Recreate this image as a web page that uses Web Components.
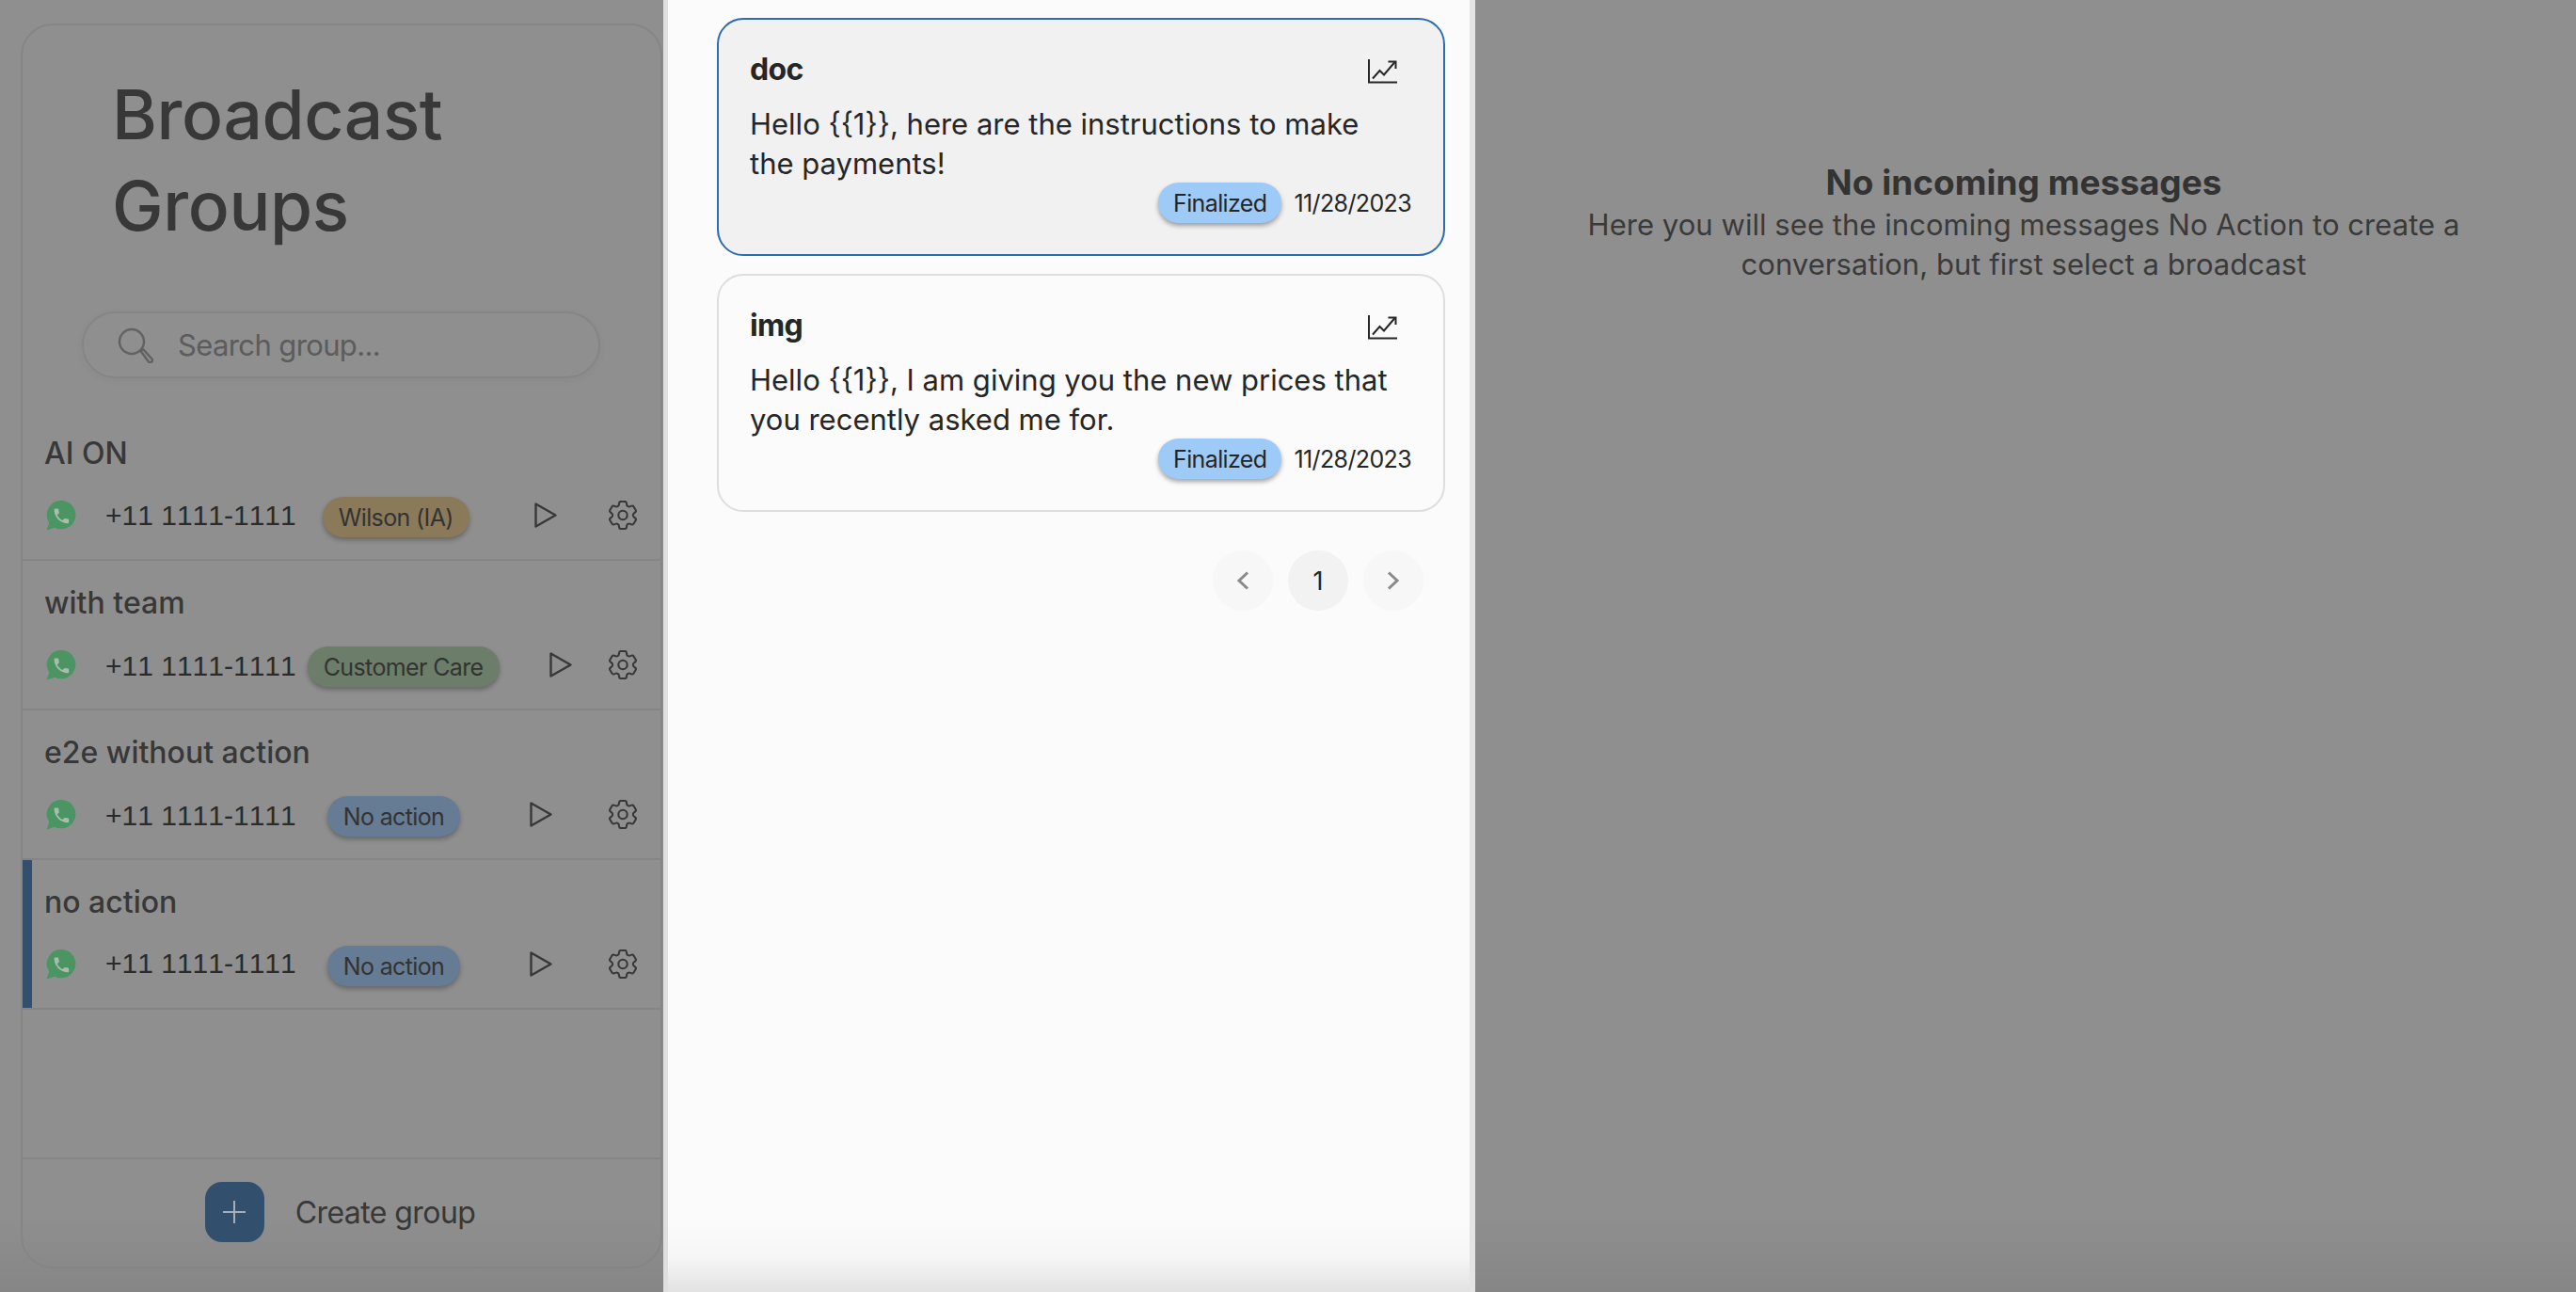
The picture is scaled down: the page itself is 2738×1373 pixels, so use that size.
<!DOCTYPE html>
<html lang="en">
<head>
<meta charset="utf-8">
<title>Broadcast Groups</title>
<style>
    html, body { margin: 0; height: 100%; }
    body {
        font-family: "Inter", "Liberation Sans", sans-serif;
        overflow: hidden;
    }
</style>
</head>
<body>

<app-shell>
    <group-panel slot="left">
        <group-row name="AI ON" chip="Wilson (IA)" tone="gold" chip-gap="28" play-gap="69" lift="4"></group-row>
        <group-row name="with team" chip="Customer Care" tone="green" chip-gap="12" play-gap="53"></group-row>
        <group-row name="e2e without action" chip="No action" tone="blue" chip-gap="33" play-gap="74" lift="1"></group-row>
        <group-row name="no action" chip="No action" tone="blue" chip-gap="33" play-gap="74" lift="6" active></group-row>
    </group-panel>

    <broadcast-list slot="middle">
        <broadcast-card name="doc" date="11/28/2023" selected>Hello {{1}}, here are the instructions to make the payments!</broadcast-card>
        <broadcast-card name="img" date="11/28/2023">Hello {{1}}, I am giving you the new prices that you recently asked me for.</broadcast-card>
        <page-nav></page-nav>
    </broadcast-list>

    <empty-inbox slot="right"></empty-inbox>
</app-shell>

<script>
    const gearPath = 'M9.594 3.94c.09-.542.56-.94 1.11-.94h2.593c.55 0 1.02.398 1.11.94l.213 1.281c.063.374.313.686.645.87.074.04.147.083.22.127.325.196.72.257 1.075.124l1.217-.456a1.125 1.125 0 0 1 1.37.49l1.296 2.247a1.125 1.125 0 0 1-.26 1.431l-1.003.827c-.293.241-.438.613-.43.992a7.723 7.723 0 0 1 0 .255c-.008.378.137.75.43.991l1.004.827c.424.35.534.955.26 1.43l-1.298 2.247a1.125 1.125 0 0 1-1.369.491l-1.217-.456c-.355-.133-.75-.072-1.076.124a6.47 6.47 0 0 1-.22.128c-.331.183-.581.495-.644.869l-.213 1.281c-.09.543-.56.94-1.11.94h-2.594c-.55 0-1.019-.398-1.11-.94l-.213-1.281c-.062-.374-.312-.686-.644-.87a6.52 6.52 0 0 1-.22-.127c-.325-.196-.72-.257-1.076-.124l-1.217.456a1.125 1.125 0 0 1-1.369-.49l-1.297-2.247a1.125 1.125 0 0 1 .26-1.431l1.004-.827c.292-.24.437-.613.43-.991a6.932 6.932 0 0 1 0-.255c.007-.38-.138-.751-.43-.992l-1.004-.827a1.125 1.125 0 0 1-.26-1.43l1.297-2.247a1.125 1.125 0 0 1 1.37-.491l1.216.456c.356.133.751.072 1.076-.124.072-.044.146-.086.22-.128.332-.183.582-.495.644-.869l.214-1.28Z';

    const icons = {
        search: `<svg width="38" height="38" viewBox="0 0 38 38" fill="none" stroke="#626262" stroke-width="2.4"><circle cx="15" cy="15" r="13"/><path d="M24.5 25 L27 23 L37 34 Q37.5 36 35.5 37 Q34 37.5 33 36.5 Z" stroke-linejoin="round"/></svg>`,
        whatsapp: `<svg width="32" height="32" viewBox="1 1 29.500 29.500"><path d="M16 1a14 14 0 1 1-6.6 26.4L1.500 30l2.500-7.300A14 14 0 0 1 16 1z" fill="#4a9562"/><g transform="translate(6.500 6.500) scale(.8)"><path fill="#a8bdae" d="M6.620 10.790c1.440 2.830 3.760 5.140 6.590 6.590l2.200-2.200c.27-.27.67-.36 1.020-.24 1.120.37 2.330.57 3.570.57.55 0 1 .45 1 1V20c0 .55-.45 1-1 1-9.390 0-17-7.610-17-17 0-.55.45-1 1-1h3.500c.55 0 1 .45 1 1 0 1.250.2 2.450.57 3.570.11.35.03.74-.25 1.020l-2.200 2.200z"/></g></svg>`,
        play: `<svg width="24" height="27" viewBox="0 0 24 27" fill="none" stroke="#383838" stroke-width="2.400" stroke-linejoin="round"><path d="M1.500 1.500 V25.500 L22.500 13.500 Z"/></svg>`,
        gear: `<svg width="30" height="31" viewBox="3 2.400 18 19.200" fill="none" stroke="#383838" stroke-width="1.300"><path d="${gearPath}"/><circle cx="12" cy="12" r="2.900"/></svg>`,
        plus: `<svg width="26" height="26" viewBox="0 0 26 26" stroke="#a7aeb6" stroke-width="2"><path d="M13 1 V25 M1 13 H25"/></svg>`,
        chart: `<svg width="31" height="26" viewBox="0 0 31 26" fill="none" stroke="#262626" stroke-width="2"><path d="M1 0 V24.500 H31"/><path d="M5 20.500 L12.500 12 L17 16.500 L28.500 3"/><path d="M21.500 2.500 H29.500 V10"/></svg>`,
        left: `<svg width="14" height="20" viewBox="0 0 14 20" fill="none" stroke="#8a8a8a" stroke-width="3"><path d="M12 1.500 L3 10 L12 18.500"/></svg>`,
        right: `<svg width="14" height="20" viewBox="0 0 14 20" fill="none" stroke="#8a8a8a" stroke-width="3"><path d="M2 1.500 L11 10 L2 18.500"/></svg>`
    };

    class AppShell extends HTMLElement {
        constructor() {
            super();
            this.attachShadow({ mode: 'open' });
            this.shadowRoot.innerHTML = `
            <style>
                :host{
                    display: flex;
                    height: 1373px;
                    width: 2738px;
                    background: linear-gradient(#8f8f8f 0, #8f8f8f 1290px, #868686 100%);
                }
                .left{ width: 705px; flex: none; }
                .middle{ width: 863px; flex: none; }
                .right{ flex: 1; min-width: 0; }
            </style>
            <div class="left"><slot name="left"></slot></div>
            <div class="middle"><slot name="middle"></slot></div>
            <div class="right"><slot name="right"></slot></div>`;
        }
    }

    class GroupPanel extends HTMLElement {
        constructor() {
            super();
            this.attachShadow({ mode: 'open' });
            this.shadowRoot.innerHTML = `
            <style>
                :host{
                    display: flex;
                    flex-direction: column;
                    box-sizing: border-box;
                    height: 1323px;
                    margin: 25px 1px 0 22px;
                    border: 2px solid #858585;
                    border-radius: 34px;
                    overflow: hidden;
                    color: #383838;
                }
                h1{
                    margin: 46px 0 0 95px;
                    font-size: 73px;
                    line-height: 97px;
                    font-weight: 500;
                    letter-spacing: -.005em;
                    width: 400px;
                }
                .search{
                    display: flex;
                    align-items: center;
                    box-sizing: border-box;
                    height: 71px;
                    width: 551px;
                    margin: 64px 0 35px 63px;
                    padding-left: 36px;
                    gap: 26px;
                    border: 2px solid #858585;
                    border-radius: 36px;
                    box-shadow: 0 2px 10px rgba(0,0,0,.04);
                    font-size: 31px;
                    letter-spacing: -.02em;
                    color: #5c5c5c;
                }
                .list{ flex: 1; }
                .foot{
                    display: flex;
                    align-items: center;
                    justify-content: center;
                    gap: 33px;
                    height: 116px;
                    padding: 0 3px 2px 0;
                    box-sizing: border-box;
                    border-top: 2px solid #858585;
                    font-size: 32px;
                    letter-spacing: -.018em;
                }
                .add{
                    display: flex;
                    align-items: center;
                    justify-content: center;
                    width: 63px;
                    height: 64px;
                    border-radius: 18px;
                    background: #32506d;
                }
            </style>
            <h1>Broadcast Groups</h1>
            <div class="search">${icons.search}<span>Search group...</span></div>
            <div class="list"><slot></slot></div>
            <div class="foot"><div class="add">${icons.plus}</div><span>Create group</span></div>`;
        }
    }

    class GroupRow extends HTMLElement {
        connectedCallback() {
            const tones = { gold: '#8b7a5a', green: '#6c7e69', blue: '#667b94' };
            const root = this.attachShadow({ mode: 'open' });
            root.innerHTML = `
            <style>
                :host{
                    display: block;
                    box-sizing: border-box;
                    height: 159px;
                    padding-left: 24px;
                    border-bottom: 2px solid #858585;
                }
                :host([active]){ box-shadow: inset 10px 0 0 #32506d; }
                .name{
                    height: 91px;
                    box-sizing: border-box;
                    margin-left: -1px;
                    padding-top: 26px;
                    font-size: 32px;
                    font-weight: 500;
                    line-height: 38px;
                }
                .line{
                    display: flex;
                    align-items: center;
                    height: 43px;
                    padding-right: 25px;
                }
                .wa{ display: flex; margin: -4px 0 0 1px; }
                .phone{
                    margin-left: 31px;
                    font-family: "Liberation Sans", sans-serif;
                    font-kerning: none;
                    font-size: 30px;
                    line-height: 36px;
                    color: #2b2b2b;
                    white-space: nowrap;
                    padding-bottom: ${this.getAttribute('lift') || 2}px;
                }
                .chip{
                    display: flex;
                    align-items: center;
                    height: 43px;
                    padding: 0 17px;
                    border-radius: 22px;
                    margin-left: ${this.getAttribute('chip-gap')}px;
                    background: ${tones[this.getAttribute('tone')]};
                    box-shadow: 0 3px 5px rgba(0,0,0,.28);
                    font-size: 25px;
                    letter-spacing: -.025em;
                    color: #333;
                    white-space: nowrap;
                }
                .play{ display: flex; margin: -4px 0 0 ${this.getAttribute('play-gap')}px; }
                .gear{ display: flex; margin: -4px 0 0 auto; }
            </style>
            <div class="name">${this.getAttribute('name')}</div>
            <div class="line">
                <span class="wa">${icons.whatsapp}</span>
                <span class="phone">+11 1111-1111</span>
                <span class="chip">${this.getAttribute('chip')}</span>
                <span class="play">${icons.play}</span>
                <span class="gear">${icons.gear}</span>
            </div>`;
        }
    }

    class BroadcastList extends HTMLElement {
        constructor() {
            super();
            this.attachShadow({ mode: 'open' });
            this.shadowRoot.innerHTML = `
            <style>
                :host{
                    display: flex;
                    flex-direction: column;
                    gap: 19px;
                    box-sizing: border-box;
                    height: 1373px;
                    padding: 19px 26px 0 52px;
                    border-left: 5px solid #dfdfdf;
                    border-right: 6px solid #e4e4e4;
                    background: linear-gradient(#fbfbfb 0, #fbfbfb 1300px, #f6f6f6 1335px, #e2e2e2 100%);
                    color: #262626;
                }
            </style>
            <slot></slot>`;
        }
    }

    class BroadcastCard extends HTMLElement {
        connectedCallback() {
            const root = this.attachShadow({ mode: 'open' });
            root.innerHTML = `
            <style>
                :host{
                    display: block;
                    box-sizing: border-box;
                    height: 253px;
                    padding: 30px 34px 0 33px;
                    border: 2px solid #dedede;
                    border-radius: 28px;
                }
                :host([selected]){ border-color: #2e6cb0; background: #f1f1f1; }
                .top{
                    display: flex;
                    justify-content: space-between;
                    align-items: center;
                    height: 44px;
                    padding-right: 15px;
                    font-size: 32px;
                    font-weight: 700;
                    letter-spacing: -.02em;
                }
                .top svg{ margin-top: 6px; }
                .text{
                    margin-top: 16px;
                    max-width: 680px;
                    font-size: 31px;
                    line-height: 42px;
                }
                .meta{
                    display: flex;
                    justify-content: flex-end;
                    align-items: center;
                    gap: 13px;
                    margin-top: -1px;
                    font-size: 25px;
                    letter-spacing: -.025em;
                }
                .chip{
                    display: flex;
                    align-items: center;
                    height: 43px;
                    padding: 0 16px;
                    border-radius: 22px;
                    background: #9ecaf7;
                    box-shadow: 0 3px 5px rgba(0,0,0,.35);
                }
            </style>
            <div class="top"><span>${this.getAttribute('name')}</span>${icons.chart}</div>
            <div class="text"><slot></slot></div>
            <div class="meta"><span class="chip">Finalized</span><span>${this.getAttribute('date')}</span></div>`;
        }
    }

    class PageNav extends HTMLElement {
        constructor() {
            super();
            this.attachShadow({ mode: 'open' });
            this.shadowRoot.innerHTML = `
            <style>
                :host{
                    display: flex;
                    justify-content: flex-end;
                    gap: 16px;
                    margin-top: 22px;
                    padding-right: 23px;
                }
                div{
                    display: flex;
                    align-items: center;
                    justify-content: center;
                    width: 64px;
                    height: 64px;
                    border-radius: 50%;
                    background: #f7f7f7;
                    font-size: 27px;
                }
                .on{ background: #f2f2f2; }
            </style>
            <div>${icons.left}</div><div class="on">1</div><div>${icons.right}</div>`;
        }
    }

    class EmptyInbox extends HTMLElement {
        constructor() {
            super();
            this.attachShadow({ mode: 'open' });
            this.shadowRoot.innerHTML = `
            <style>
                :host{
                    display: block;
                    padding: 170px 4px 0 0;
                    text-align: center;
                    color: #3a3a3a;
                }
                h2{
                    margin: 0;
                    font-size: 37px;
                    line-height: 47px;
                    font-weight: 700;
                    color: #333;
                }
                p{
                    margin: 1px auto 0;
                    width: 960px;
                    font-size: 31px;
                    line-height: 42px;
                    letter-spacing: .05px;
                }
            </style>
            <h2>No incoming messages</h2>
            <p>Here you will see the incoming messages No Action to create a conversation, but first select a broadcast</p>`;
        }
    }

    customElements.define('app-shell', AppShell);
    customElements.define('group-panel', GroupPanel);
    customElements.define('group-row', GroupRow);
    customElements.define('broadcast-list', BroadcastList);
    customElements.define('broadcast-card', BroadcastCard);
    customElements.define('page-nav', PageNav);
    customElements.define('empty-inbox', EmptyInbox);
</script>
</body>
</html>
